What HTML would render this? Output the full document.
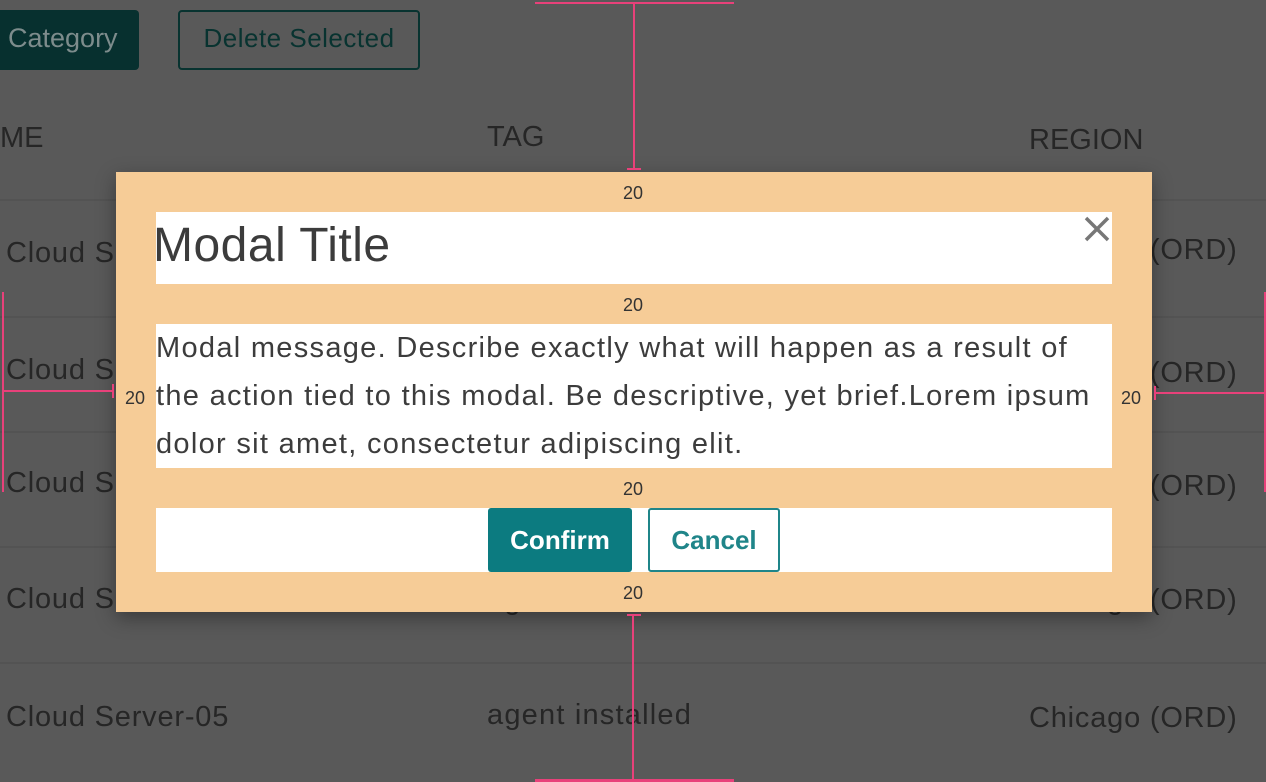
<!DOCTYPE html>
<html><head><meta charset="utf-8"><style>
*{margin:0;padding:0;box-sizing:border-box}
body{width:1266px;height:782px;background:#595959;position:relative;overflow:hidden;font-family:"Liberation Sans",sans-serif;color:#262626}
.a{position:absolute;white-space:nowrap}
.sep{position:absolute;left:0;width:1266px;height:2px;background:#535353}
.p{position:absolute;background:#e8417a}
.row{font-size:29px;letter-spacing:0.8px}
</style></head><body>
<div class="a" style="left:-10px;top:10px;width:149px;height:60px;background:#07302f;border-radius:4px;color:#7d8c8c;font-size:27px;line-height:56px;padding-left:18px">Category</div>
<div class="a" style="left:178px;top:10px;width:242px;height:60px;border:2px solid #083330;border-radius:4px;color:#083330;font-size:26px;letter-spacing:0.5px;line-height:52px;text-align:center">Delete Selected</div>
<div class="a" style="left:0;top:118px;font-size:29px;line-height:40px">ME</div>
<div class="a" style="left:487px;top:117px;font-size:29px;line-height:40px">TAG</div>
<div class="a" style="left:1029px;top:120px;font-size:29px;line-height:40px">REGION</div>
<div class="sep" style="top:199px"></div><div class="sep" style="top:316px"></div><div class="sep" style="top:431px"></div><div class="sep" style="top:546px"></div><div class="sep" style="top:662px"></div>
<div class="a row" style="left:6px;top:237px">Cloud Server-01</div>
<div class="a row" style="left:6px;top:354px">Cloud Server-02</div>
<div class="a row" style="left:6px;top:467px">Cloud Server-03</div>
<div class="a row" style="left:6px;top:583px">Cloud Server-04</div>
<div class="a row" style="left:6px;top:701px">Cloud Server-05</div>
<div class="a row" style="left:487px;top:699px;letter-spacing:1.2px">agent installed</div>
<div class="a row" style="left:487px;top:584px;letter-spacing:1.2px">agent installed</div>
<div class="a row" style="left:1029px;top:234px">Chicago (ORD)</div>
<div class="a row" style="left:1029px;top:357px">Chicago (ORD)</div>
<div class="a row" style="left:1029px;top:470px">Chicago (ORD)</div>
<div class="a row" style="left:1029px;top:584px">Chicago (ORD)</div>
<div class="a row" style="left:1029px;top:702px">Chicago (ORD)</div>

<div class="a" style="left:116px;top:172px;width:1036px;height:440px;background:#f6cc97;box-shadow:0 6px 18px rgba(0,0,0,.35)">
<div class="a" style="left:40px;top:40px;width:956px;height:72px;background:#fff"></div>
<div class="a" style="left:37px;top:46px;font-size:48px;letter-spacing:0.5px;color:#3c3c3c;line-height:56px">Modal Title</div>
<svg class="a" style="left:968px;top:44px" width="26" height="26" viewBox="0 0 26 26"><path d="M2 2L24 24M24 2L2 24" stroke="#777" stroke-width="3.5"/></svg>
<div class="a" style="left:40px;top:152px;width:956px;height:144px;background:#fff;font-size:29px;letter-spacing:1.3px;line-height:48px;color:#3c3c3c;white-space:normal">Modal message. Describe exactly what will happen as a result of the action tied to this modal. Be descriptive, yet brief.Lorem ipsum dolor sit amet, consectetur adipiscing elit.</div>
<div class="a" style="left:40px;top:336px;width:956px;height:64px;background:#fff"></div>
<div class="a" style="left:372px;top:336px;width:144px;height:64px;background:#0c7b80;border-radius:3px;color:#fff;font-size:26px;font-weight:bold;line-height:64px;text-align:center">Confirm</div>
<div class="a" style="left:532px;top:336px;width:132px;height:64px;border:2px solid #1f8589;border-radius:3px;color:#1f8589;font-size:26px;font-weight:bold;line-height:60px;text-align:center">Cancel</div>
<div class="a" style="left:507px;top:11px;font-size:18px;color:#333">20</div>
<div class="a" style="left:507px;top:123px;font-size:18px;color:#333">20</div>
<div class="a" style="left:507px;top:307px;font-size:18px;color:#333">20</div>
<div class="a" style="left:507px;top:411px;font-size:18px;color:#333">20</div>
<div class="a" style="left:9px;top:216px;font-size:18px;color:#333">20</div>
<div class="a" style="left:1005px;top:216px;font-size:18px;color:#333">20</div>
</div>

<div class="p" style="left:535px;top:2px;width:199px;height:2px"></div>
<div class="p" style="left:633px;top:2px;width:2px;height:168px"></div>
<div class="p" style="left:627px;top:168px;width:14px;height:2px"></div>
<div class="p" style="left:627px;top:614px;width:14px;height:2px"></div>
<div class="p" style="left:632px;top:614px;width:2px;height:166px"></div>
<div class="p" style="left:535px;top:779px;width:199px;height:3px"></div>
<div class="p" style="left:2px;top:292px;width:2px;height:200px"></div>
<div class="p" style="left:2px;top:390px;width:112px;height:2px"></div>
<div class="p" style="left:112px;top:384px;width:2px;height:14px"></div>
<div class="p" style="left:1264px;top:292px;width:2px;height:200px"></div>
<div class="p" style="left:1155px;top:392px;width:110px;height:2px"></div>
<div class="p" style="left:1154px;top:386px;width:2px;height:14px"></div>
</body></html>
